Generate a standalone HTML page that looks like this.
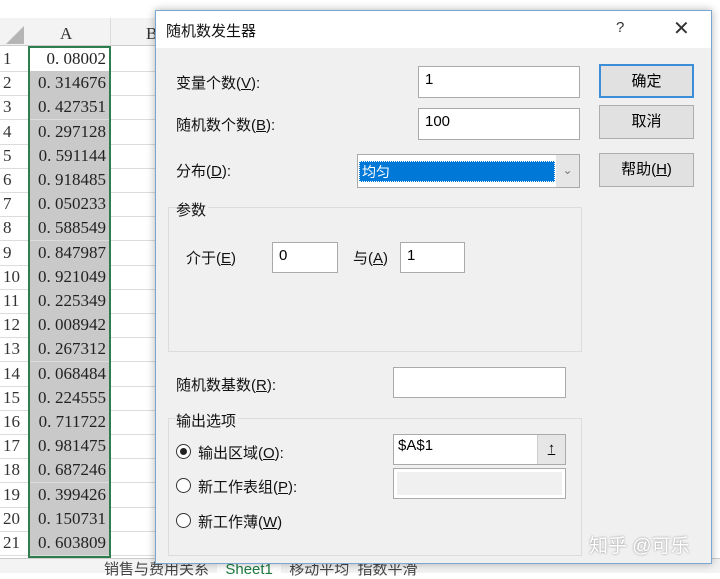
<!DOCTYPE html>
<html><head><meta charset="utf-8"><style>
*{margin:0;padding:0;box-sizing:border-box}
body{width:720px;height:573px;overflow:hidden;background:#fff;position:relative;font-family:"Liberation Sans","Noto Sans CJK SC",sans-serif;}
.abs{position:absolute}
.rn{position:absolute;left:0;width:28px;font-family:"Liberation Serif","Noto Serif CJK SC",serif;font-size:17px;color:#333;text-align:left;padding-left:3px}
.cell{position:absolute;left:28px;width:82px;font-family:"Liberation Serif","Noto Serif CJK SC",serif;font-size:17px;color:#222;text-align:right;padding-right:4px;background:#c9c9c9;white-space:nowrap;overflow:hidden}
.hl{position:absolute;left:0;width:155px;height:1px;background:#dcdcdc}
.dlg{position:absolute;left:155px;top:10px;width:557px;height:554px;background:#f0f0f0;border:1px solid #7aa7d0;box-shadow:0 0 8px rgba(0,0,0,.3)}
.t{position:absolute;font-size:15px;color:#111;white-space:nowrap}
.in{position:absolute;background:#fff;border:1px solid #aaa;font-size:15px;padding:4px 6px}
.btn{position:absolute;left:443px;width:95px;height:34px;background:#e1e1e1;border:1px solid #adadad;font-size:15px;text-align:center;line-height:32px}
.grp{position:absolute;border:1px solid #dcdcdc}
.rad{position:absolute;width:15px;height:15px;border:1px solid #333;border-radius:50%;background:#fff}
u{text-decoration:underline}
</style></head><body>
<div class="abs" style="left:0;top:0;width:155px;height:18px;background:#fff"></div>
<div class="abs" style="left:0;top:18px;width:155px;height:28px;background:#f3f3f3;border-bottom:1px solid #ccc"></div>
<div class="abs" style="left:6px;top:26px;width:0;height:0;border-left:18px solid transparent;border-bottom:18px solid #b5b5b5"></div>
<div class="abs" style="left:60px;top:24px;font-family:'Liberation Serif',serif;font-size:17px;color:#333">A</div>
<div class="abs" style="left:146px;top:24px;font-family:'Liberation Serif',serif;font-size:17px;color:#333">B</div>
<div class="abs" style="left:110px;top:18px;width:1px;height:540px;background:#dcdcdc"></div>
<div id="rows"></div>
<div class="abs" style="left:28px;top:46px;width:83px;height:512px;border:2px solid #2e7d4f"></div>
<div class="abs" style="left:0;top:558px;width:720px;height:15px;background:#f3f3f3;border-top:1px solid #ccc"></div>
<div class="abs" style="left:104px;top:558px;font-size:15px;color:#444">销售与费用关系 &nbsp;<span style="color:#1d7a3f;background:#fff;padding:0 8px">Sheet1</span>&nbsp; 移动平均 &nbsp;指数平滑</div>
<div class="dlg">
 <div class="abs" style="left:0;top:0;width:555px;height:37px;background:#fff"></div>
 <div class="t" style="left:10px;top:9px">随机数发生器</div>
 <div class="t" style="left:460px;top:8px;color:#333">?</div>
 <div class="t" style="left:517px;top:5px;font-size:20px;color:#333">✕</div>
 <div class="t" style="left:20px;top:61px">变量个数(<u>V</u>):</div>
 <div class="in" style="left:262px;top:55px;width:162px;height:32px">1</div>
 <div class="t" style="left:20px;top:103px">随机数个数(<u>B</u>):</div>
 <div class="in" style="left:262px;top:97px;width:162px;height:32px">100</div>
 <div class="t" style="left:20px;top:149px">分布(<u>D</u>):</div>
 <div class="in" style="left:201px;top:143px;width:223px;height:34px;padding:0"></div>
 <div class="abs" style="left:203px;top:150px;width:196px;height:21px;background:#0078d7;color:#fff;font-size:14px;padding-left:2px;line-height:21px;border:1px dotted #fff">均匀</div>
 <div class="abs" style="left:400px;top:144px;width:23px;height:32px;background:#e6e6e6;color:#777;font-size:12px;text-align:center;line-height:30px">&#8964;</div>
 <div class="btn" style="top:53px;border:2px solid #3c8ed8">确定</div>
 <div class="btn" style="top:94px">取消</div>
 <div class="btn" style="top:142px">帮助(<u>H</u>)</div>
 <div class="grp" style="left:12px;top:196px;width:414px;height:145px"></div>
 <div class="t" style="left:20px;top:188px;background:#f0f0f0;padding-right:2px">参数</div>
 <div class="t" style="left:30px;top:236px">介于(<u>E</u>)</div>
 <div class="in" style="left:116px;top:231px;width:66px;height:31px">0</div>
 <div class="t" style="left:197px;top:236px">与(<u>A</u>)</div>
 <div class="in" style="left:244px;top:231px;width:65px;height:31px">1</div>
 <div class="t" style="left:20px;top:363px">随机数基数(<u>R</u>):</div>
 <div class="in" style="left:237px;top:356px;width:173px;height:31px"></div>
 <div class="grp" style="left:12px;top:407px;width:414px;height:138px"></div>
 <div class="t" style="left:20px;top:399px;background:#f0f0f0;padding-right:2px">输出选项</div>
 <div class="rad" style="left:20px;top:433px"></div><div class="abs" style="left:24px;top:437px;width:7px;height:7px;border-radius:50%;background:#222"></div>
 <div class="t" style="left:42px;top:431px">输出区域(<u>O</u>):</div>
 <div class="in" style="left:237px;top:423px;width:173px;height:31px;padding:2px 4px">$A$1</div>
 <div class="abs" style="left:381px;top:424px;width:28px;height:29px;background:#e6e6e6;border-left:1px solid #ccc;text-align:center;font-size:15px;font-weight:bold;line-height:27px"><u>↑</u></div>
 <div class="rad" style="left:20px;top:467px"></div>
 <div class="t" style="left:42px;top:465px">新工作表组(<u>P</u>):</div>
 <div class="in" style="left:237px;top:457px;width:173px;height:31px;padding:0"><div style="margin:3px;height:23px;background:#f0f0f0"></div></div>
 <div class="rad" style="left:20px;top:502px"></div>
 <div class="t" style="left:42px;top:500px">新工作薄(<u>W</u>)</div>
 <div class="t" style="left:433px;top:520px;font-size:19px;color:#fff;text-shadow:0 0 2px #888">知乎 @可乐</div>
</div>
<script>
var v=["0.08002","0.314676","0.427351","0.297128","0.591144","0.918485","0.050233","0.588549","0.847987","0.921049","0.225349","0.008942","0.267312","0.068484","0.224555","0.711722","0.981475","0.687246","0.399426","0.150731","0.603809"];
var h="";for(var i=0;i<21;i++){var t=47+i*24.2;
h+='<div class="rn" style="top:'+(t+2)+'px">'+(i+1)+'</div>';
h+='<div class="cell" style="top:'+t+'px;height:24px;line-height:24px;'+(i==0?'background:#fff':'')+'">'+v[i].replace('.','.&nbsp;')+'</div>';
h+='<div class="hl" style="top:'+(t+24)+'px"></div>';}
document.getElementById('rows').innerHTML=h;
</script>
</body></html>
